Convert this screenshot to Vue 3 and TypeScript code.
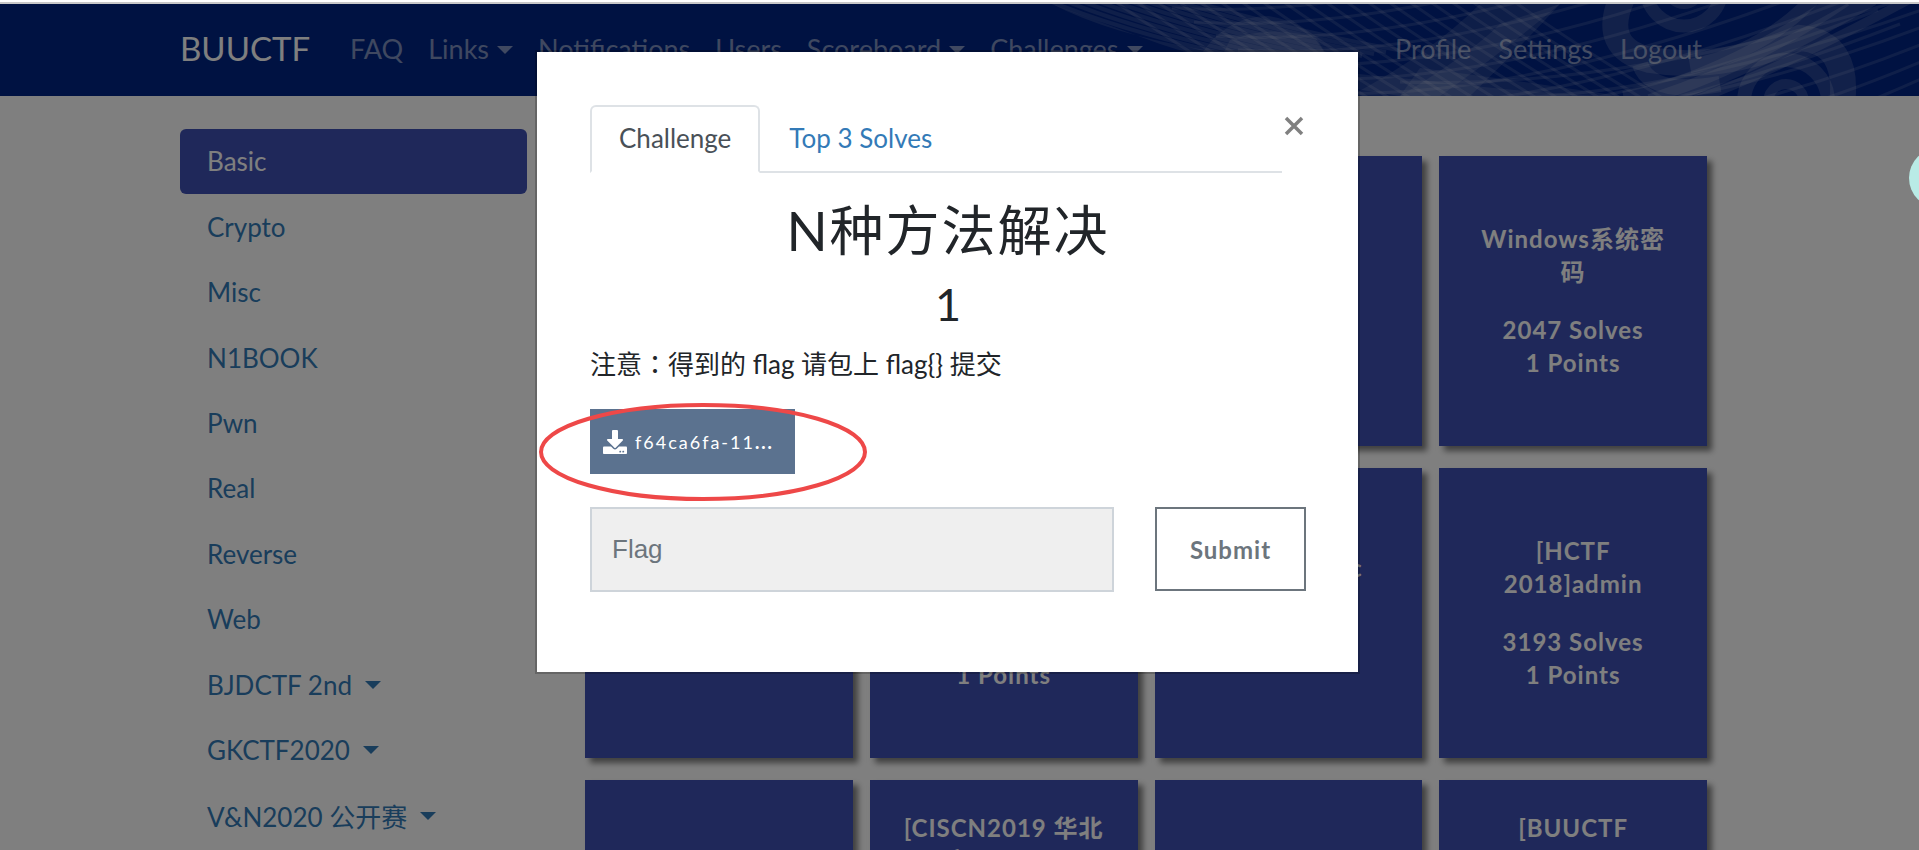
<script setup lang="ts">
import { ref } from 'vue'

interface NavItem {
  label: string
  menu?: boolean
}

interface Card {
  name: string
  solves?: string
}

const mainLinks: NavItem[] = [
  { label: 'FAQ' },
  { label: 'Links', menu: true },
  { label: 'Notifications' },
  { label: 'Users' },
  { label: 'Scoreboard', menu: true },
  { label: 'Challenges', menu: true },
]
const userLinks = ['Profile', 'Settings', 'Logout']

const categories: NavItem[] = [
  { label: 'Basic' },
  { label: 'Crypto' },
  { label: 'Misc' },
  { label: 'N1BOOK' },
  { label: 'Pwn' },
  { label: 'Real' },
  { label: 'Reverse' },
  { label: 'Web' },
  { label: 'BJDCTF 2nd', menu: true },
  { label: 'GKCTF2020', menu: true },
  { label: 'V&N2020 公开赛', menu: true },
]

const cards: (Card | null)[] = [
  null,
  null,
  null,
  { name: 'Windows系统密码', solves: '2047 Solves' },
  null,
  { name: '[GXYCTF2019] Ping Ping', solves: '3000 Solves' },
  { name: 'RoarCTF doc', solves: '3100 Solves' },
  { name: '[HCTF 2018]admin', solves: '3193 Solves' },
  null,
  { name: '[CISCN2019 华北赛区 Day2' },
  null,
  { name: '[BUUCTF' },
]

const flag = ref('')

const rising = Array.from({ length: 11 }, (_, i) => {
  const y = -30 + i * 14
  return `M${150 + i * 22} ${y + 20} Q ${380 + i * 20} ${y + 34} ${680 + i * 22} ${y - 90}`
})
const sweeping = Array.from({ length: 9 }, (_, i) => {
  const y = 78 + i * 17
  return `M${400 + i * 30} ${y} Q ${640 + i * 14} ${y + 8} 930 ${y - 92}`
})
const fan = Array.from({ length: 10 }, (_, i) => `M${52 + i * 16} -2 Q ${140 + i * 16} ${34 - i} ${290 + i * 12} ${64 - i * 2}`)
const falling = Array.from({ length: 20 }, (_, i) => {
  const x = 110 + i * 21
  return `M${x} -6 Q ${x + 62} 38 ${x + 160} 98`
})
</script>

<template>
  <div class="page">
    <div class="strip"></div>
    <header class="navbar">
      <svg class="art" viewBox="0 0 919 92" width="919" height="92" aria-hidden="true">
        <g fill="none" stroke="#fff" stroke-opacity="0.12">
          <path v-for="d in rising" :key="'r' + d" :d="d" stroke-width="3" />
          <path v-for="d in sweeping" :key="'s' + d" :d="d" stroke-width="3" />
          <path v-for="d in fan" :key="'n' + d" :d="d" stroke-width="4" />
          <path v-for="d in falling" :key="'f' + d" :d="d" stroke-width="3" />
        </g>
        <g fill="#fff" fill-opacity="0.11">
          <path d="M52 0 Q110 30 205 46 Q300 66 420 76 Q520 88 600 92 H400 Q250 70 160 40 Q100 18 52 0Z" />
          <path d="M200 52 Q226 12 268 12 Q310 18 326 52Z" />
          <path d="M230 36 Q272 20 316 34 L330 56 H220Z" />
          <path d="M350 92 Q430 50 480 0 H560 Q500 50 440 92Z" />
          <path d="M400 92 Q470 50 500 20 L560 0 Q510 54 470 92Z" />
          <path d="M420 64 Q500 74 620 92 H400Z" />
        </g>
        <g fill="none" stroke="#fff" stroke-opacity="0.14">
          <circle cx="684" cy="-16" r="38" stroke-width="13" />
          <circle cx="684" cy="-16" r="16" stroke-width="10" />
          <circle cx="786" cy="98" r="42" stroke-width="14" />
          <circle cx="786" cy="98" r="18" stroke-width="10" />
          <path d="M622 -6 Q600 44 650 56 Q720 68 800 34 Q850 38 842 100" stroke-width="26" />
          <path d="M640 60 Q650 92 720 80" stroke-width="16" />
          <path d="M624 96 Q720 78 844 -6" stroke-width="18" />
          <path d="M650 98 Q760 62 872 -6" stroke-width="16" />
          <path d="M690 98 Q770 70 912 -6" stroke-width="9" />
          <path d="M690 62 Q760 50 814 -6" stroke-width="14" />
        </g>
      </svg>
      <nav class="container nav-row">
        <a class="brand" href="#">BUUCTF</a>
        <a v-for="l in mainLinks" :key="l.label" class="nav-link" href="#">
          {{ l.label }}<i v-if="l.menu" class="caret"></i>
        </a>
        <div class="user-links">
          <a v-for="l in userLinks" :key="l" class="nav-link" href="#">{{ l }}</a>
        </div>
      </nav>
    </header>

    <main class="body">
      <div class="container content">
        <nav class="sidebar">
          <a
            v-for="(c, i) in categories"
            :key="c.label"
            class="category"
            :class="{ active: i === 0 }"
            href="#"
          >{{ c.label }}<i v-if="c.menu" class="caret"></i></a>
        </nav>
        <section class="cards">
          <button
            v-for="(c, i) in cards"
            :key="i"
            class="card"
            :class="{ long: c && !c.solves }"
            type="button"
          >
            <template v-if="c">
              <span class="card-name">{{ c.name }}</span>
              <template v-if="c.solves">
                <span>{{ c.solves }}</span>
                <span>1 Points</span>
              </template>
            </template>
          </button>
        </section>
      </div>
    </main>

    <div class="backdrop">
      <div class="modal" role="dialog" aria-label="N种方法解决">
        <div class="modal-head">
          <div class="tabs">
            <a class="tab tab-active" href="#">Challenge</a>
            <a class="tab" href="#">Top 3 Solves</a>
          </div>
          <button class="close" type="button" aria-label="Close">
            <svg viewBox="0 0 24 24" width="24" height="24">
              <path d="M4 4 L20 20 M20 4 L4 20" stroke="#808080" stroke-width="3.5" fill="none" />
            </svg>
          </button>
        </div>
        <h2 class="title">N种方法解决</h2>
        <h3 class="value">1</h3>
        <p class="note">注意<span class="colon">：</span>得到的 flag 请包上 flag{} 提交</p>
        <div class="file">
          <a class="download" href="#">
            <svg viewBox="0 0 512 512" width="24" height="24" aria-hidden="true">
              <path
                fill="#fff"
                d="M216 0h80c13 0 24 11 24 24v168h88c18 0 27 22 14 34L270 378c-7 7-20 7-27 0L90 226c-13-13-4-34 14-34h88V24c0-13 11-24 24-24zm296 376v112c0 13-11 24-24 24H24c-13 0-24-11-24-24V376c0-13 11-24 24-24h147l49 49c20 20 52 20 72 0l49-49h147c13 0 24 11 24 24zM388 464c0-11-9-20-20-20s-20 9-20 20 9 20 20 20 20-9 20-20zm64 0c0-11-9-20-20-20s-20 9-20 20 9 20 20 20 20-9 20-20z"
              />
            </svg>
            <span>f64ca6fa-11<b>...</b></span>
          </a>
          <svg class="mark" viewBox="0 0 330 100" width="330" height="100" aria-hidden="true">
            <ellipse cx="165" cy="50" rx="162" ry="47" fill="none" stroke="#ee4848" stroke-width="4" />
          </svg>
        </div>
        <form class="answer" @submit.prevent>
          <input v-model="flag" type="text" placeholder="Flag" aria-label="Flag" />
          <button class="submit" type="submit">Submit</button>
        </form>
      </div>
    </div>
    <button class="bubble" type="button" aria-label="Open side panel"></button>
  </div>
</template>

<style>
body {
  overflow: hidden;
}
</style>

<style scoped>
.page {
  position: relative;
  height: 100vh;
  overflow: hidden;
  background: #fff;
  color: #212529;
  font-family: Lato, 'Noto Sans CJK SC', sans-serif;
  font-size: 26px;
}
.page * {
  box-sizing: border-box;
}
a {
  color: #337ab7;
  text-decoration: none;
}
.strip {
  height: 4px;
  border-bottom: 2px solid #c8c8c8;
}
.container {
  width: 81%;
  margin: 0 auto;
}
.navbar {
  position: relative;
  height: 92px;
  padding-right: 24px;
  background: #002484;
  font-size: 27px;
}
.art {
  position: absolute;
  top: 0;
  right: 0;
}
.nav-row {
  position: relative;
  display: flex;
  align-items: center;
  gap: 1px;
  height: 100%;
  padding-bottom: 4px;
}
.brand {
  margin-right: 27px;
  color: #fff;
  font-size: 33px;
}
.nav-link {
  padding: 0 12px;
  color: rgba(255, 255, 255, 0.5);
  white-space: nowrap;
}
.user-links {
  display: flex;
  gap: 3px;
  margin-right: 1px;
  margin-left: auto;
}
.caret {
  display: inline-block;
  margin-left: 8px;
  vertical-align: 5px;
  border: 8px solid transparent;
  border-top-color: currentColor;
  border-bottom: 0;
}
.body {
  padding-right: 24px;
}
.content {
  display: grid;
  grid-template-columns: 347px 1fr;
  column-gap: 58px;
}
.sidebar {
  display: grid;
  grid-auto-rows: 1fr;
  height: 720px;
  margin-top: 33px;
}
.category {
  display: flex;
  align-items: center;
  padding: 0 27px 1px;
  border-radius: 6px;
  white-space: pre;
}
.category .caret {
  margin-left: 13px;
}
.category.active {
  background: #3f51b5;
  color: #fff;
}
.cards {
  display: grid;
  grid-template-columns: repeat(4, 1fr);
  grid-auto-rows: 290px;
  gap: 22px 17px;
  margin-top: 60px;
  padding-right: 8px;
}
.card {
  display: flex;
  flex-direction: column;
  align-items: center;
  justify-content: center;
  padding: 0 32px 1px;
  border: 0;
  background: #3f51b5;
  box-shadow: 5px 5px 6px rgba(0, 0, 0, 0.5);
  color: #fff;
  font: 700 24px/33px Lato, 'Noto Sans CJK SC', sans-serif;
  letter-spacing: 1px;
}
.card.long {
  justify-content: flex-start;
  padding-top: 31px;
}
.card-name {
  margin-bottom: 25px;
}
.backdrop {
  position: absolute;
  inset: 4px 0 0;
  padding: 48px 24px 0 0;
  background: rgba(0, 0, 0, 0.5);
}
.modal {
  width: 821px;
  margin: 0 auto;
  padding: 53px 52px 80px 53px;
  background: #fff;
  box-shadow: 0 0 0 2px rgba(0, 0, 0, 0.2);
}
.modal-head {
  display: flex;
  align-items: flex-start;
}
.tabs {
  display: flex;
  flex: 1;
  border-bottom: 2px solid #dee2e6;
}
.tab {
  height: 68px;
  margin-bottom: -2px;
  padding: 0 27px;
  border: 2px solid transparent;
  line-height: 62px;
}
.tab-active {
  border-color: #dee2e6 #dee2e6 #fff;
  border-radius: 6px 6px 0 0;
  background: #fff;
  color: #495057;
}
.close {
  display: flex;
  margin-top: 9px;
  padding: 0;
  border: 0;
  background: none;
}
.title,
.value,
.note {
  margin: 0;
  font-weight: 400;
}
.title {
  margin-top: 26px;
  font-size: 54px;
  line-height: 64px;
  letter-spacing: 2px;
  text-align: center;
}
.value {
  margin-top: 14px;
  font-size: 45px;
  line-height: 54px;
  text-align: center;
}
.note {
  margin-top: 14px;
  line-height: 39px;
}
.colon {
  font-family: 'Noto Sans CJK TC', sans-serif;
  line-height: 1;
}
.file {
  position: relative;
  margin-top: 25px;
}
.download {
  display: flex;
  align-items: center;
  gap: 8px;
  width: 205px;
  height: 65px;
  padding-left: 13px;
  background: #5b728f;
  color: #fff;
  font-size: 18px;
  letter-spacing: 2px;
}
.download b {
  font-weight: 900;
}
.mark {
  position: absolute;
  top: -7px;
  left: -52px;
}
.answer {
  display: flex;
  justify-content: space-between;
  margin-top: 33px;
}
input {
  width: 524px;
  height: 85px;
  padding: 0 20px;
  border: 2px solid #ced4da;
  border-radius: 0;
  background: #efefef;
  font: 26px 'Liberation Sans', Arial, sans-serif;
}
input::placeholder {
  color: #6c757d;
  opacity: 1;
}
.submit {
  width: 151px;
  height: 84px;
  border: 2px solid #6c757d;
  background: #fff;
  color: #6c757d;
  font: 700 24px Lato, sans-serif;
  letter-spacing: 1px;
}
.bubble {
  position: absolute;
  top: 148px;
  left: calc(100% - 10px);
  width: 60px;
  height: 60px;
  border: 0;
  border-radius: 50%;
  background: #b9ebe6;
}
</style>
